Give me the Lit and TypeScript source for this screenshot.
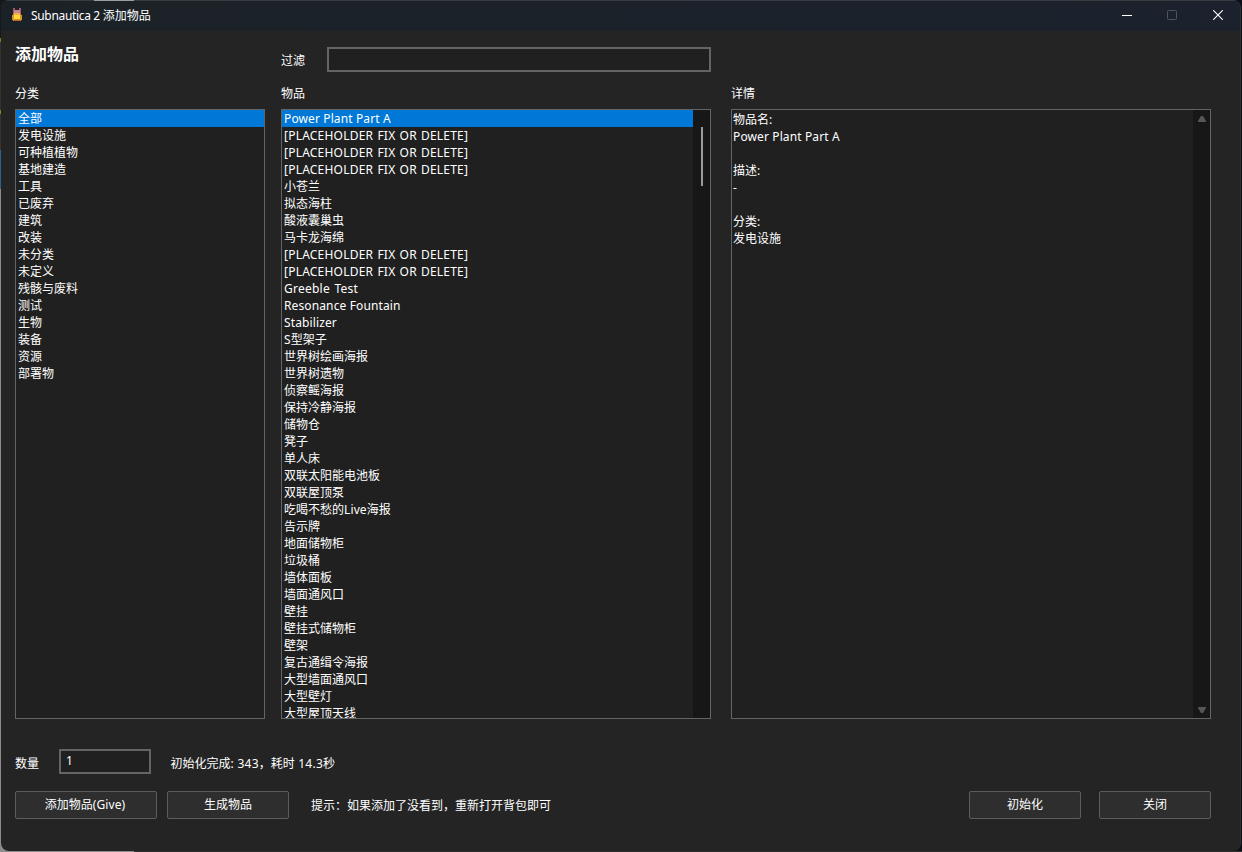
import { LitElement, html, css } from "lit";
import { customElement, property, state } from "lit/decorators.js";
import { classMap } from "lit/directives/class-map.js";

const textStyles = css`
  .latin { letter-spacing: var(--latin-spacing, 0.12px); }
  .caps { letter-spacing: 0.22px; word-spacing: 0.8px; }
  .loose { letter-spacing: 0.24px; word-spacing: 1.2px; }
`;

/* Wraps Latin runs so that they get their own tracking next to the CJK glyphs. */
const mixed = (text: string) =>
  text
    .split(/([\x20-\x7e]+)/)
    .filter((part) => part.length > 0)
    .map((part) =>
      /^[\x20-\x7e]/.test(part)
        ? html`<span class=${classMap({ latin: true, caps: /^\[[A-Z ]+\]$/.test(part), loose: part.split(" ").length === 2 && / T/.test(part) })}>${part}</span>`
        : part
    );

const CATEGORIES = ["全部", "发电设施", "可种植植物", "基地建造", "工具", "已废弃", "建筑", "改装", "未分类", "未定义", "残骸与废料", "测试", "生物", "装备", "资源", "部署物"];

const P = "[PLACEHOLDER FIX OR DELETE]";
const ITEMS = ["Power Plant Part A", P, P, P, "小苍兰", "拟态海柱", "酸液囊巢虫", "马卡龙海绵", P, P, "Greeble Test", "Resonance Fountain", "Stabilizer", "S型架子", "世界树绘画海报", "世界树遗物", "侦察鳐海报", "保持冷静海报", "储物仓", "凳子", "单人床", "双联太阳能电池板", "双联屋顶泵", "吃喝不愁的Live海报", "告示牌", "地面储物柜", "垃圾桶", "墙体面板", "墙面通风口", "壁挂", "壁挂式储物柜", "壁架", "复古通缉令海报", "大型墙面通风口", "大型壁灯", "大型屋顶天线"];

@customElement("list-box")
class ListBox extends LitElement {
  @property({ attribute: false }) items: string[] = [];
  @property({ type: Boolean }) scroll = false;
  @state() selected = 0;

  static styles = [
    textStyles,
    css`
      :host { display: flex; box-sizing: border-box; border: 1px solid #646464; background: #202020; overflow: hidden; min-height: 0; }
      .rows { flex: 1; min-width: 0; }
      .row { height: 17px; line-height: 17px; padding-left: 2px; white-space: pre; cursor: default; }
      .selected { background: #0078d7; }
      .track { width: 17px; background: #171717; padding-top: 17px; box-sizing: border-box; }
      .thumb { width: 2px; height: 59px; margin-left: 8px; background: #9a9a9a; }
    `,
  ];

  render() {
    return html`
      <div class="rows">
        ${this.items.map(
          (item, i) => html`<div class=${classMap({ row: true, selected: i === this.selected })} @click=${() => (this.selected = i)}>${mixed(item)}</div>`
        )}
      </div>
      ${this.scroll ? html`<div class="track"><div class="thumb"></div></div>` : null}
    `;
  }
}

@customElement("app-root")
class AppRoot extends LitElement {
  static styles = [
    textStyles,
    css`
      :host { display: block; width: 1242px; height: 852px; overflow: hidden; color: #fff; font: 12px/17px "Noto Sans", "Noto Sans CJK SC", sans-serif; }
      .desktop {
        box-sizing: border-box; width: 1242px; height: 852px; padding: 0 1px 1px;
        background:
          linear-gradient(to right, #8c8c8c 134px, #303030 134px) 0 851px / 100% 1px no-repeat,
          linear-gradient(to bottom, #16181a 38px, #80752a 38px 42px, #333 42px 110px, #8a8020 110px 114px, #3a332c 114px 150px, #2d628c 150px 189px, #8c8c8c 189px) 0 0 / 8px 100% no-repeat,
          #0c0f18;
      }
      .window { box-sizing: border-box; height: 851px; border-radius: 8px; background: #242424; border-right: 1px solid #2e3034; overflow: hidden; display: flex; flex-direction: column; }
      .titlebar {
        box-sizing: border-box; height: 31px; flex: none; display: flex; align-items: center; padding-left: 9px;
        background:
          linear-gradient(to right, #363b40 93px, #9a9fa3 93px 133px, #363b40 133px) 0 0 / 100% 1px no-repeat,
          linear-gradient(to right, #1b2227, #1c222d);
      }
      .app-icon { display: block; width: 14px; height: 14px; margin-top: -1px; }
      .title { margin-left: 7px; flex: 1; white-space: pre; --latin-spacing: -0.33px; }
      .captions { display: flex; height: 30px; margin: 0 -1px 1px 0; }
      .caption { width: 46px; height: 30px; display: flex; align-items: center; justify-content: center; }
      .caption.minimize { width: 44px; }
      .caption svg { display: block; }
      .body { flex: 1; padding: 13px 29px 0 14px; display: flex; flex-direction: column; }
      .top { display: grid; grid-template-columns: 266px 46px 384px; height: 35px; }
      h1 { margin: -1px 0 0; font-size: 16px; line-height: 22px; font-weight: 700; }
      .filter-label { padding-top: 8px; }
      .input { box-sizing: border-box; border: 2px solid #646464; background: #202020; height: 25px; }
      .filter { margin-top: 3px; }
      .panels { display: grid; grid-template-columns: 266px 450px 480px; grid-template-rows: 30px 610px; }
      .label { padding-top: 6px; }
      .categories { width: 250px; }
      .items { width: 430px; }
      .details { box-sizing: border-box; border: 1px solid #646464; background: #202020; display: flex; }
      .details-text { flex: 1; white-space: pre; padding: 1px 0 0 1px; }
      .details-track { width: 17px; background: #171717; display: flex; flex-direction: column; justify-content: space-between; align-items: center; padding: 6px 0 5px; box-sizing: border-box; }
      .details-track svg { display: block; }
      .quantity { display: flex; height: 25px; margin-top: 30px; }
      .quantity-label { width: 44px; padding-top: 6px; }
      .amount { width: 92px; padding: 1px 5px; }
      .status { padding: 6px 0 0 19.6px; white-space: pre; --latin-spacing: 0.25px; }
      .actions { display: flex; height: 28px; margin-top: 17px; }
      button { box-sizing: border-box; margin: 0 10px 0 0; padding: 0 0 1px; height: 28px; border: 1px solid #5c5c5c; border-radius: 2px; background: #2e2e2e; color: #fff; font: inherit; }
      .give { width: 142px; padding-right: 2px; }
      .spawn { width: 122px; }
      .init { width: 112px; margin-right: 18px; }
      .close { width: 112px; margin-right: 0; }
      .hint { flex: 1; padding: 6px 0 0 12px; }
    `,
  ];

  private icon() {
    return html`<svg class="app-icon" viewBox="0 0 14 14" shape-rendering="crispEdges">
      <path d="M3 0h2v2h4V0h2v6H3z" fill="#9c5a68" />
      <path d="M4 2h6v4H4z" fill="#c98490" />
      <path d="M3 6h8v1h1v5h-1v1H3v-1H2V7h1z" fill="#d8922c" />
      <path d="M4 5h6v2H4z" fill="#f0b04a" />
      <path d="M4 7h6v4H4z" fill="#ffd83a" />
      <path d="M4 12h6v1H4z" fill="#b8641e" />
    </svg>`;
  }

  render() {
    return html`
      <div class="desktop">
        <div class="window">
          <div class="titlebar">
            ${this.icon()}
            <div class="title">${mixed("Subnautica 2 添加物品")}</div>
            <div class="captions">
              <div class="caption minimize"><svg width="10" height="10"><path d="M0 5.5h10" stroke="#fff" /></svg></div>
              <div class="caption"><svg width="10" height="10"><rect x=".5" y=".5" width="9" height="9" rx="1" fill="none" stroke="#50555d" /></svg></div>
              <div class="caption"><svg width="10" height="10"><path d="M.2 .2l9.6 9.6M9.8 .2l-9.6 9.6" stroke="#fff" stroke-width="1.1" /></svg></div>
            </div>
          </div>
          <div class="body">
            <div class="top">
              <h1>添加物品</h1>
              <div class="filter-label">过滤</div>
              <div class="input filter"></div>
            </div>
            <div class="panels">
              <div class="label">分类</div>
              <div class="label">物品</div>
              <div class="label">详情</div>
              <list-box class="categories" .items=${CATEGORIES}></list-box>
              <list-box class="items" .items=${ITEMS} scroll></list-box>
              <div class="details">
                <div class="details-text">${mixed("物品名:")}<br />${mixed("Power Plant Part A")}<br /><br />${mixed("描述:")}<br />${mixed("-")}<br /><br />${mixed("分类:")}<br />发电设施</div>
                <div class="details-track">
                  <svg width="8" height="6"><path d="M3 0h2L8 5v1H0V5z" fill="#565656" /></svg>
                  <svg width="8" height="6"><path d="M3 6h2L8 1V0H0v1z" fill="#565656" /></svg>
                </div>
              </div>
            </div>
            <div class="quantity">
              <div class="quantity-label">数量</div>
              <div class="input amount">1</div>
              <div class="status">${mixed("初始化完成: 343")}，${mixed("耗时 14.3秒")}</div>
            </div>
            <div class="actions">
              <button class="give">${mixed("添加物品(Give)")}</button>
              <button class="spawn">生成物品</button>
              <div class="hint">提示：如果添加了没看到，重新打开背包即可</div>
              <button class="init">初始化</button>
              <button class="close">关闭</button>
            </div>
          </div>
        </div>
      </div>
    `;
  }
}
